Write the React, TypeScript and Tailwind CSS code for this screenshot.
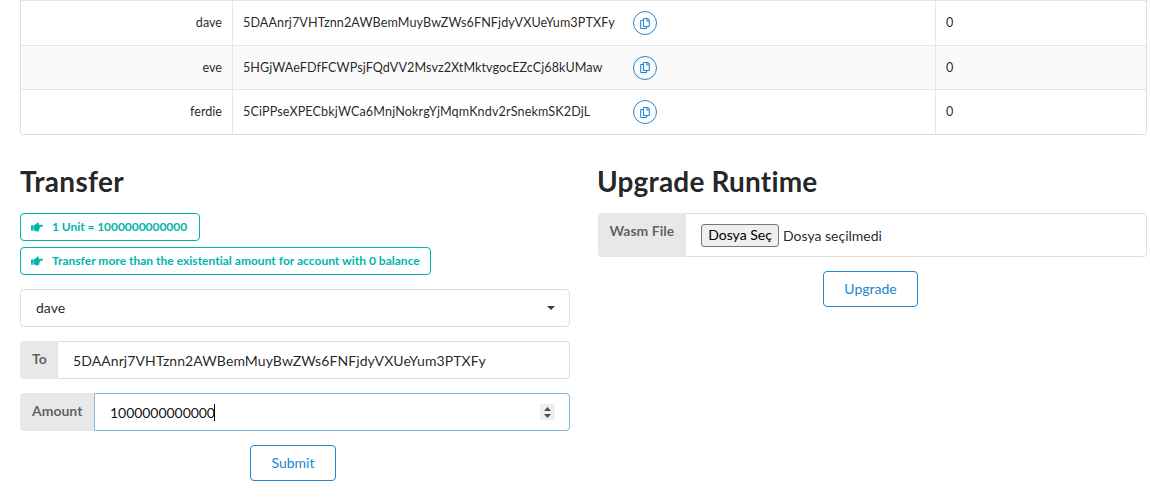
import React from "react";
import { FaHandPointRight, FaRegCopy } from "react-icons/fa";

type Account = { name: string; address: string; balance: string; row: string; tracking: string };

const accounts: Account[] = [
  {
    name: "dave",
    address: "5DAAnrj7VHTznn2AWBemMuyBwZWs6FNFjdyVXUeYum3PTXFy",
    balance: "0",
    row: "h-[45px] bg-white",
    tracking: "tracking-[0.09px]",
  },
  {
    name: "eve",
    address: "5HGjWAeFDfFCWPsjFQdVV2Msvz2XtMktvgocEZcCj68kUMaw",
    balance: "0",
    row: "h-[44px] bg-[#fafafa]",
    tracking: "tracking-[0.06px]",
  },
  {
    name: "ferdie",
    address: "5CiPPseXPECbkjWCa6MnjNokrgYjMqmKndv2rSnekmSK2DjL",
    balance: "0",
    row: "h-[45px] bg-white",
    tracking: "tracking-[0.125px]",
  },
];

function AccountTable() {
  return (
    <div className="w-[1127px] overflow-hidden rounded-b border border-t-0 border-[#dededf] text-[12.6px] leading-[18px]">
      {accounts.map((a) => (
        <div key={a.name} className={`flex border-t border-[#e5e5e5] ${a.row}`}>
          <div className="flex w-[211px] items-center justify-end pr-[10px]">{a.name}</div>
          <div className="flex w-[703px] items-center border-l border-[#e5e5e5] pl-[10px]">
            <span className={`w-[390px] ${a.tracking}`}>{a.address}</span>
            <button className="flex size-6 items-center justify-center rounded-full border border-[#2185d0] text-[#2185d0]">
              <FaRegCopy className="h-[11px] w-[10px]" />
            </button>
          </div>
          <div className="flex flex-1 items-center border-l border-[#e5e5e5] pl-[10px]">{a.balance}</div>
        </div>
      ))}
    </div>
  );
}

function Hint({ children, width }: { children: React.ReactNode; width: string }) {
  return (
    <div
      className={`flex h-7 items-center whitespace-nowrap rounded border border-[#00b5ad] pl-[10px] text-[12px] font-bold leading-3 text-[#00b5ad] ${width}`}
    >
      <FaHandPointRight className="mr-[9px] h-3 w-3" />
      <span>{children}</span>
    </div>
  );
}

function FieldLabel({ children, width }: { children: React.ReactNode; width: string }) {
  return (
    <div
      className={`shrink-0 whitespace-nowrap rounded-l bg-[#e8e8e8] pl-3 pt-[11px] text-[14px] font-bold leading-[14px] text-black/60 ${width}`}
    >
      {children}
    </div>
  );
}

function OutlineButton({ children, width }: { children: React.ReactNode; width: string }) {
  return (
    <button
      className={`h-9 rounded border border-[#2185d0] text-[14px] leading-[14px] text-[#2185d0] ${width}`}
    >
      {children}
    </button>
  );
}

export default function App() {
  return (
    <div className="h-[503px] w-[1150px] overflow-hidden bg-white pl-5 font-['Lato',sans-serif] text-black/87 [font-variant-ligatures:none]">
      <AccountTable />
      <div className="mt-7 flex">
        <section className="flex w-[550px] flex-col">
          <h1 className="h-[50px] text-[28px] font-bold leading-9 tracking-[0.3px]">Transfer</h1>
          <Hint width="w-[180px]">
            <span className="tracking-[-0.05px]">1 Unit = 1000000000000</span>
          </Hint>
          <div className="h-[6px]" />
          <Hint width="w-[411px]">
            <span className="tracking-[0.015px]">
              Transfer more than the existential amount for account with 0 balance
            </span>
          </Hint>

          <div className="mt-[14px] flex h-[38px] items-center justify-between rounded border border-[#dededf] pl-[15px] pr-[14px] text-[14px]">
            <span className="pb-[2px]">dave</span>
            <svg className="h-1 w-2" viewBox="0 0 8 4">
              <path d="M0 0h8L4 4z" fill="#3f3f3f" />
            </svg>
          </div>

          <div className="mt-[14px] flex h-[38px]">
            <FieldLabel width="w-[38px]">To</FieldLabel>
            <div className="flex flex-1 items-center rounded-r border border-l-0 border-[#dededf] pl-[15px] text-[14px] tracking-[0.09px]">
              5DAAnrj7VHTznn2AWBemMuyBwZWs6FNFjdyVXUeYum3PTXFy
            </div>
          </div>

          <div className="mt-[14px] flex h-[38px]">
            <FieldLabel width="w-[74px]">Amount</FieldLabel>
            <div className="flex flex-1 items-center rounded-r border border-[#85b7d9] pl-[15px] pr-[14px] text-[14px] text-black/95">
              <span className="tracking-[-0.05px]">1000000000000</span>
              <span className="-ml-px h-[17px] w-px bg-black" />
              <span className="ml-auto flex h-4 w-[15px] items-center justify-center bg-[#efefef]">
                <svg className="h-[11px] w-[7px]" viewBox="0 0 7 11">
                  <path d="M0 4L3.5 0L7 4zM0 7h7L3.5 11z" fill="#4d4d4d" />
                </svg>
              </span>
            </div>
          </div>

          <div className="mt-[14px] flex pl-[230px]">
            <OutlineButton width="w-[86px]">Submit</OutlineButton>
          </div>
        </section>

        <section className="ml-[28px] flex w-[549px] flex-col">
          <h1 className="-ml-px h-[50px] text-[28px] font-bold leading-9 tracking-[0.17px]">Upgrade Runtime</h1>
          <div className="flex h-11">
            <FieldLabel width="w-[88px]">
              <span className="-ml-[0.5px]">Wasm File</span>
            </FieldLabel>
            <div className="flex flex-1 items-center rounded-r border border-l-0 border-[#dededf] pl-[15px] text-[14px]">
              <button className="mr-1 h-[23px] w-[78px] rounded-[3px] border border-[#767676] bg-[#efefef] text-[14px] leading-5 text-black">
                Dosya Seç
              </button>
              <span>Dosya seçilmedi</span>
            </div>
          </div>
          <div className="mt-[14px] flex pl-[225px]">
            <OutlineButton width="w-[95px]">Upgrade</OutlineButton>
          </div>
        </section>
      </div>
    </div>
  );
}
